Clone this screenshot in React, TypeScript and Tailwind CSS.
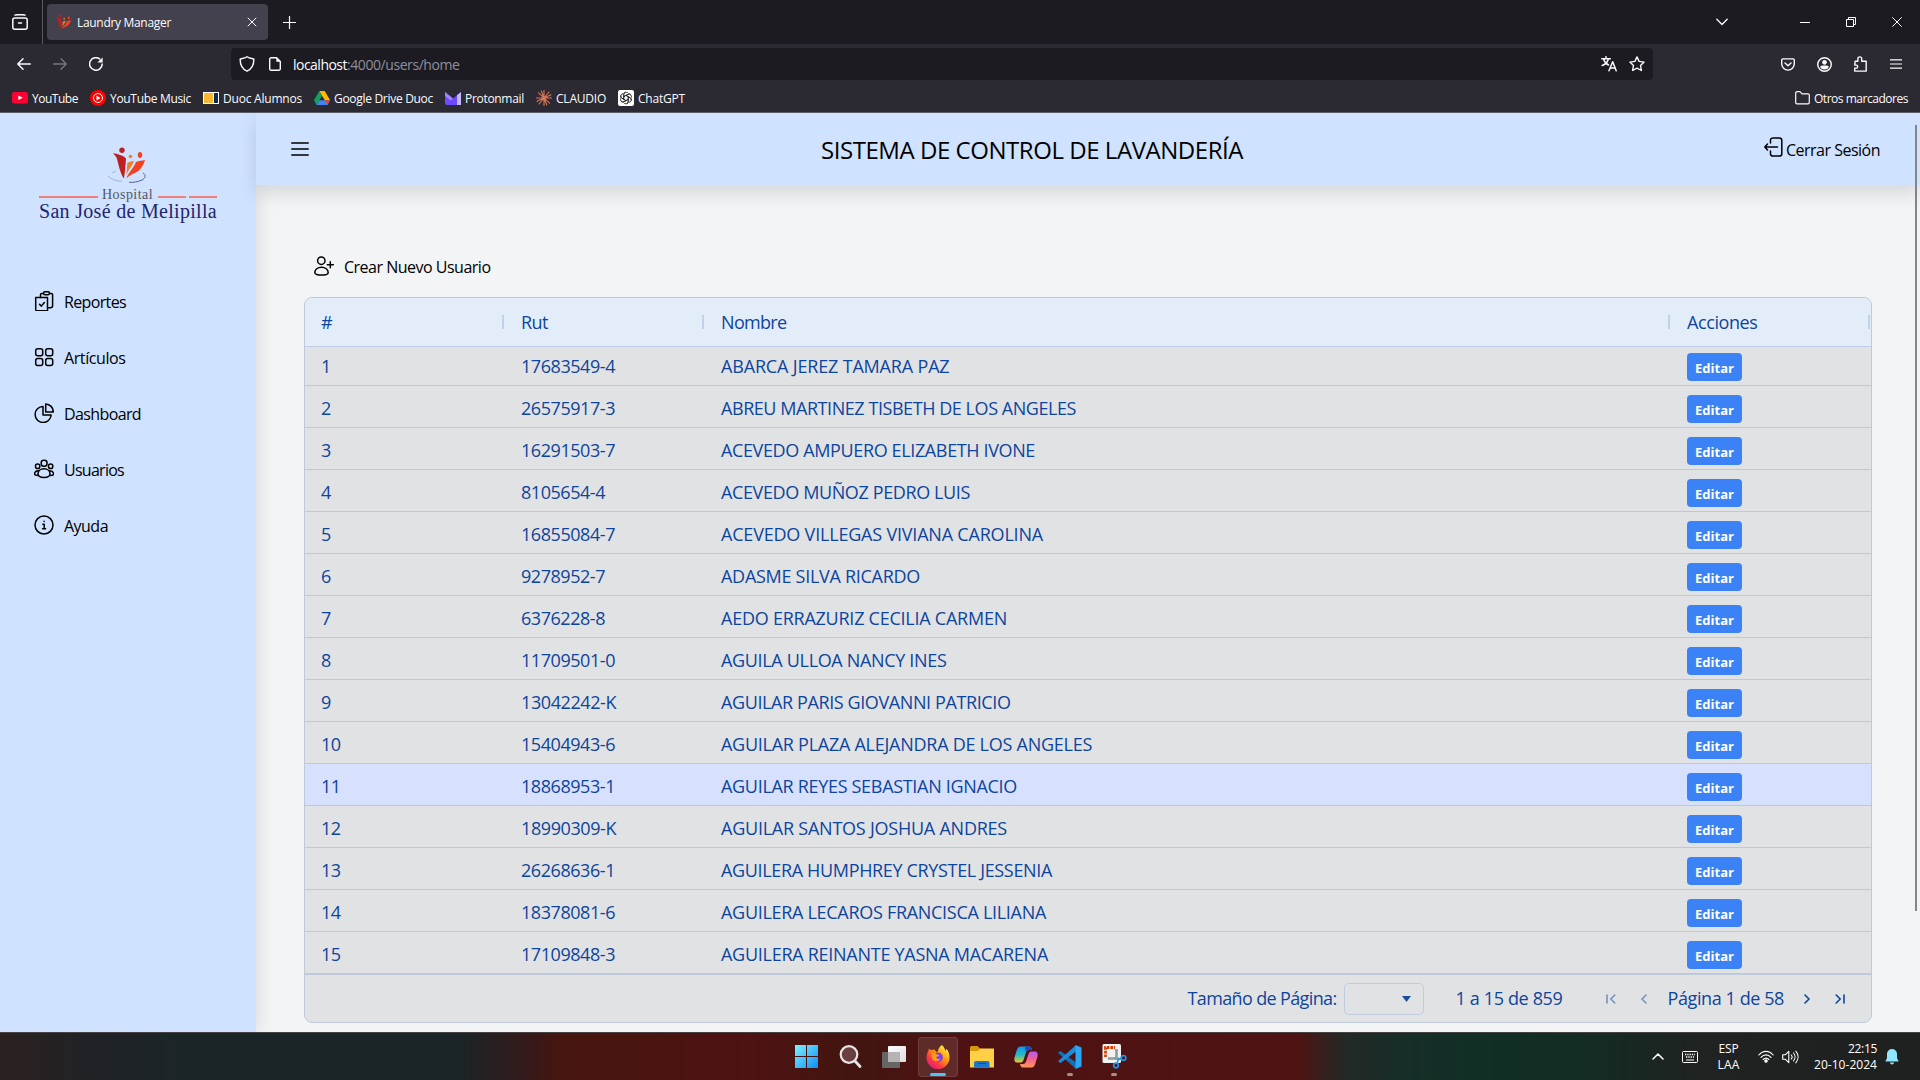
import { useLayoutEffect, useRef, type ReactNode } from 'react';

/** Inline text whose tracking is tuned so the line takes the given width. */
function Fit({ w, children, className = '' }: { w: number; children: string; className?: string }) {
  const ref = useRef<HTMLSpanElement>(null);
  useLayoutEffect(() => {
    const el = ref.current;
    if (!el) return;
    el.style.letterSpacing = '0px';
    const natural = el.getBoundingClientRect().width;
    el.style.letterSpacing = `${(w - natural) / children.length}px`;
  }, [w, children]);
  return (
    <span ref={ref} className={`inline-block whitespace-pre ${className}`}>
      {children}
    </span>
  );
}

const users: [string, number, string, number][] = [
  ['17683549-4', 94, 'ABARCA JEREZ TAMARA PAZ', 228.5],
  ['26575917-3', 94, 'ABREU MARTINEZ TISBETH DE LOS ANGELES', 355],
  ['16291503-7', 94, 'ACEVEDO AMPUERO ELIZABETH IVONE', 314],
  ['8105654-4', 84, 'ACEVEDO MUÑOZ PEDRO LUIS', 249],
  ['16855084-7', 94, 'ACEVEDO VILLEGAS VIVIANA CAROLINA', 322],
  ['9278952-7', 84, 'ADASME SILVA RICARDO', 199],
  ['6376228-8', 84, 'AEDO ERRAZURIZ CECILIA CARMEN', 286],
  ['11709501-0', 94, 'AGUILA ULLOA NANCY INES', 225.5],
  ['13042242-K', 95, 'AGUILAR PARIS GIOVANNI PATRICIO', 289.5],
  ['15404943-6', 94, 'AGUILAR PLAZA ALEJANDRA DE LOS ANGELES', 371],
  ['18868953-1', 94, 'AGUILAR REYES SEBASTIAN IGNACIO', 296],
  ['18990309-K', 95, 'AGUILAR SANTOS JOSHUA ANDRES', 286],
  ['26268636-1', 94, 'AGUILERA HUMPHREY CRYSTEL JESSENIA', 331],
  ['18378081-6', 94, 'AGUILERA LECAROS FRANCISCA LILIANA', 325],
  ['17109848-3', 94, 'AGUILERA REINANTE YASNA MACARENA', 327],
];

function Figures() {
  return (
    <>
      <circle cx="14" cy="3.200" r="2.700" fill="#b8232a" />
      <circle cx="22.500" cy="9.500" r="1.800" fill="#ee7f2b" />
      <ellipse cx="32" cy="8" rx="2.200" ry="2.900" fill="#f2421f" />
      <path d="M5 6c4 1.200 10 2 13 5.500C17.500 18 17 25 16 31.500 12 27 10.500 16 8.500 10.500Z" fill="#be2022" />
      <path d="M19.300 16c2.200-1.200 4.500-1.800 6.700-2-1.500 5-6 8.500-7.600 14.500Z" fill="#ee7f2b" />
      <path d="M28 15c3-1.500 6-1.200 9-2-1 3.500-3 7.500-6 10.500-4 3-8.500 3.500-12.500 8 1.500-6 7.500-10.500 9.500-16.500Z" fill="#f2421f" />
    </>
  );
}

const S = { fill: 'none', stroke: 'currentColor', strokeLinecap: 'round', strokeLinejoin: 'round' } as const;

function Ico({ children, className = 'size-4', vb = '0 0 16 16', sw = 1.3 }: { children: ReactNode; className?: string; vb?: string; sw?: number }) {
  return (
    <svg viewBox={vb} className={`shrink-0 ${className}`} {...S} strokeWidth={sw}>
      {children}
    </svg>
  );
}

function Bookmark({ icon, label, w, ml = '' }: { icon: ReactNode; label: string; w: number; ml?: string }) {
  return (
    <div className={`flex items-center gap-1 ${ml}`}>
      {icon}
      <Fit w={w} className="pt-[2px]">{label}</Fit>
    </div>
  );
}

function BrowserChrome() {
  return (
    <div className="flex h-[113px] flex-col bg-[#2b2a33] text-[12px] text-[#fbfbfe]">
      <div className="flex h-11 items-center bg-[#1c1b22]">
        <div className="flex h-11 w-[43px] items-center border-r border-[#5b5a62] pl-3">
          <Ico className="size-4" sw={1.5}>
            <path d="M3 1.200C4 .7 5 .7 6 .7h4c1 0 2 0 3 .5" />
            <rect x=".8" y="3.900" width="14.400" height="11.300" rx="2" />
            <path d="M6.500 9h3" />
          </Ico>
        </div>
        <div className="ml-1 flex h-9 w-[221px] items-center rounded-[4px] bg-[#42414d] pl-2">
          <svg viewBox="3 0 36 33" className="h-4 w-[17px]"><Figures /></svg>
          <Fit w={94} className="ml-[5px] pt-[2px]">Laundry Manager</Fit>
          <Ico className="ml-auto mr-[11px] size-[10px]" vb="0 0 10 10" sw={1}>
            <path d="m1 1 8 8M9 1 1 9" />
          </Ico>
        </div>
        <Ico className="ml-[15px] size-[13px]" vb="0 0 13 13" sw={1.2}>
          <path d="M6.500.5v12M.5 6.500h12" />
        </Ico>
        <div className="ml-auto flex items-center">
          <Ico className="mr-[72px] size-3" vb="0 0 12 12" sw={1.3}>
            <path d="m.8 3.300 5.200 5.200 5.200-5.200" />
          </Ico>
          <div className="mr-9 h-px w-[10px] bg-white" />
          <svg viewBox="0 0 10 10" className="mr-9 size-[10px]" fill="none" stroke="#fff">
            <path d="M.5 2.500h7v7h-7zM2.500 2.500v-2h7v7h-2" />
          </svg>
          <svg viewBox="0 0 10 10" className="mr-[18px] size-[10px]" fill="none" stroke="#fff">
            <path d="m.3.3 9.400 9.400M9.700.3.300 9.700" />
          </svg>
        </div>
      </div>
      <div className="flex h-10 items-center">
        <Ico className="ml-[17px] size-[14px]" vb="0 0 14 14" sw={1.5}>
          <path d="M13.300 7H.8M6 1.800.8 7 6 12.200" />
        </Ico>
        <Ico className="ml-[22px] size-[14px] text-[#77767e]" vb="0 0 14 14" sw={1.4}>
          <path d="M.7 7h12.500M8 1.800 13.200 7 8 12.200" />
        </Ico>
        <Ico className="ml-[22px] size-[14px]" vb="0 0 14 14" sw={1.500}>
          <path d="M13.200 7A6.300 6.300 0 1 1 10.800 2" />
          <path d="M13.600.4v5.200H8.400Z" fill="currentColor" stroke="none" />
        </Ico>
        <div className="ml-[128px] flex h-8 w-[1422px] items-center rounded-[4px] bg-[#1c1b22] pl-2">
          <Ico className="size-4" sw={1.400}>
            <path d="M8 .8C6 2.200 3.500 2.500 1.200 3 1 8.500 3 13 8 15.200 13 13 15 8.500 14.800 3 12.500 2.500 10 2.200 8 .8Z" />
          </Ico>
          <Ico className="ml-[14px] h-[14px] w-3" vb="0 0 12 14" sw={1.400}>
            <path d="M2.500.7h5l3.800 3.800v7.300a1.500 1.500 0 0 1-1.500 1.500H2.200A1.500 1.500 0 0 1 .7 11.800V2.200A1.500 1.500 0 0 1 2.200.7Z" />
            <path d="M7.300 0v4.700H12Z" fill="currentColor" stroke="none" />
          </Ico>
          <div className="ml-3 flex pt-px text-[14px]">
            <Fit w={54}>localhost</Fit>
            <Fit w={112.5} className="text-[#8f8f9d]">:4000/users/home</Fit>
          </div>
          <div className="ml-auto mr-2 flex items-center gap-3">
            <Ico className="size-4" sw={1.500}>
              <path d="M.8 2.700h8.500M5 .7v2M7.500 2.700C6.500 6 4 8.500 1.200 9.500M2.500 2.900C3.500 6 5.500 8 7.500 9M8 14.800l3.700-9 3.500 9M9.300 12h4.700" />
            </Ico>
            <Ico className="size-4" sw={1.400}>
              <path d="m8 .9 2.100 4.500 5 .7-3.600 3.400.9 5L8 12.100l-4.400 2.400.9-5L.9 6.100l5-.7Z" />
            </Ico>
          </div>
        </div>
        <div className="ml-auto mr-[18px] flex items-center">
          <Ico className="h-[13px] w-[14px]" vb="0 0 14 13" sw={1.400}>
            <path d="M2 .9h10a1.300 1.300 0 0 1 1.300 1.300v3.600a6.300 6.300 0 0 1-12.600 0V2.200A1.300 1.300 0 0 1 2 .9ZM4 5l3 2.800L10 5" />
          </Ico>
          <Ico className="ml-[22px] size-[15px]" sw={1.500}>
            <circle cx="8" cy="8" r="7.200" />
            <circle cx="8" cy="5.700" r="2.500" fill="currentColor" stroke="none" />
            <path d="M3.500 10.300c0-1.500 9-1.500 9 0 0 1.500-2 3-4.500 3s-4.500-1.500-4.500-3Z" fill="currentColor" stroke="none" />
          </Ico>
          <Ico className="ml-[20px] mr-px size-4" sw={1.400}>
            <path d="M3.200 5.200h2.700V2.800a1.900 1.900 0 0 1 3.800 0v2.400h4.500v9.900H2.700v-3h1.500a1.500 1.500 0 0 0 0-3H2.700Z" />
          </Ico>
          <Ico className="ml-[21px] h-[10px] w-3" vb="0 0 12 10" sw={1.200}>
            <path d="M0 .8h12M0 5h12M0 9.200h12" />
          </Ico>
        </div>
      </div>
      <div className="flex h-[29px] items-center border-b border-[#5b5b66] pl-3">
        <Bookmark label="YouTube" w={46} icon={
          <svg viewBox="0 0 16 12" className="h-3 w-4"><rect width="16" height="11.500" rx="2.500" fill="#ff0033" /><path d="m6.300 3.500 4.500 2.300-4.500 2.300Z" fill="#fff" /></svg>
        } />
        <Bookmark ml="ml-3" label="YouTube Music" w={81} icon={
          <svg viewBox="0 0 16 16" className="size-4"><circle cx="8" cy="8" r="8" fill="#f00" /><circle cx="8" cy="8" r="4.500" fill="none" stroke="#fff" strokeWidth="1" /><path d="m6.500 5.500 4 2.500-4 2.500Z" fill="#fff" /></svg>
        } />
        <Bookmark ml="ml-3" label="Duoc Alumnos" w={79} icon={
          <svg viewBox="0 0 16 12" className="h-3 w-4"><path d="M0 0h16v12H0z" fill="#fff" /><path d="M1 1h9v10H1z" fill="#fdb62f" /><path d="M11 1h4v10h-4z" fill="#0a2c57" /></svg>
        } />
        <Bookmark ml="ml-3" label="Google Drive Duoc" w={99} icon={
          <svg viewBox="0 0 16 14" className="h-[14px] w-4"><path d="M5.300 0h5.400L16 9h-5.300L8 4.700Z" fill="#ffba00" /><path d="M5.300 0 0 9.300 2.600 14 8 4.700Z" fill="#12a05c" /><path d="M5.300 9.300H16L13.400 14H2.600Z" fill="#4285f4" /><path d="M10.700 9.300H16L13.400 14Z" fill="#ea4335" /></svg>
        } />
        <Bookmark ml="ml-3" label="Protonmail" w={59} icon={
          <svg viewBox="0 0 16 13" className="h-[13px] w-4"><path d="M0 0 8 6.500 16 0v13H2a2 2 0 0 1-2-2Z" fill="#6d4aff" /><path d="M12 3.200 16 0v13h-4Z" fill="#c5b7ff" /><path d="m0 0 8 6.500-2.500 2L0 4Z" fill="#9d86ff" /></svg>
        } />
        <Bookmark ml="ml-3" label="CLAUDIO" w={50} icon={
          <svg viewBox="-8 -8 16 16" className="size-4" stroke="#d97757" strokeWidth="1.100" strokeLinecap="round"><path d="M0-7.500v15M-7.500 0h15M-5.500-5.200l11 10.400M5-6-5 6M-2.700-7 2.700 7M-7 3.300l14-6.600" /></svg>
        } />
        <Bookmark ml="ml-3" label="ChatGPT" w={47} icon={
          <svg viewBox="-8 -8 16 16" className="size-4"><rect x="-8" y="-8" width="16" height="16" rx="2" fill="#fff" />
            <g fill="none" stroke="#222" strokeWidth=".8">{[0, 60, 120, 180, 240, 300].map((a) => <path key={a} transform={`rotate(${a})`} d="M-2.200 1.300v-4.600a2.500 2.500 0 0 1 4.600-1.300M-2.200-1.500 2-3.800a2.400 2.400 0 0 1 3 .5" />)}</g></svg>
        } />
        <div className="ml-auto mr-[12px] flex items-center gap-1">
          <Ico className="h-[14px] w-[15px]" vb="0 0 15 14" sw={1.200}>
            <path d="M.7 2a1.300 1.300 0 0 1 1.300-1.300h3l2 2.100h6a1.300 1.300 0 0 1 1.300 1.300v7.500a1.300 1.300 0 0 1-1.300 1.300H2A1.300 1.300 0 0 1 .7 11.600Z" />
          </Ico>
          <Fit w={94} className="pt-[2px]">Otros marcadores</Fit>
        </div>
      </div>
    </div>
  );
}

const menu: { label: string; w: number; icon: ReactNode }[] = [
  { label: 'Reportes', w: 62, icon: <><path d="M1.800 6.500h11.700v13.300H3A1.300 1.300 0 0 1 1.700 18.500V6.500Z" /><path d="m5.500 13.300 1.900 1.800 3-3.500M6.500 6.500V3.700c0-.8.500-1.200 1.200-1.200h1.800M15.500 2.500h1.800c.8 0 1.300.5 1.300 1.300v10.800c0 1.500-.8 2.200-2 2.200h-3M9.500 2.300c0-1 .7-1.600 1.600-1.600h2.800c1 0 1.600.6 1.600 1.600s-.6 1.500-1.600 1.500h-2.800c-.9 0-1.600-.5-1.600-1.500Z" /></> },
  { label: 'Artículos', w: 61.500, icon: <><rect x="1.700" y="1.700" width="7" height="7" rx="2" /><rect x="11.700" y="1.700" width="7" height="7" rx="2" /><rect x="1.700" y="11.500" width="7" height="7" rx="2" /><rect x="11.700" y="11.500" width="7" height="7" rx="2" /></> },
  { label: 'Dashboard', w: 77, icon: <><path d="M9 3.500a8 8 0 1 0 8.100 8.600H9Z" /><path d="M11.700.9a8 8 0 0 1 7.600 8h-7.600Z" /></> },
  { label: 'Usuarios', w: 60, icon: <><rect x="7.200" y="1.200" width="5.800" height="6" rx="2.500" /><rect x="1.500" y="5" width="4.300" height="4.500" rx="2.100" /><rect x="14.500" y="5" width="4.300" height="4.500" rx="2.100" /><path d="M10 9.800c3.500 0 6 2.200 6 5s-2.500 3.700-6 3.700-6-.9-6-3.700 2.500-5 6-5ZM4.500 11.800c-2.600.2-3.900 2-3.900 3.300 0 1 1.200 1.500 3.400 1.500M15.700 11.800c2.600.2 3.900 2 3.900 3.300 0 1-1.200 1.500-3.400 1.500" /></> },
  { label: 'Ayuda', w: 44, icon: <><circle cx="10" cy="10" r="9" /><path d="M8.800 9.200h1.400v4.500M8.600 13.800h3M10.100 6.300v.2" /></> },
];

function Sidebar() {
  return (
    <aside className="relative z-0 flex w-64 shrink-0 flex-col bg-[#cfe2ff] shadow-[4px_0_16px_rgba(0,0,0,0.09)]">
      <div className="mx-auto mt-[34px] flex h-20 w-[178px] flex-col items-center">
        <svg viewBox="0 0 44 38" className="h-[38px] w-11 shrink-0">
          <path d="M37 26c3 1.500 3 5-1 7s-9 2.500-13 2.300" fill="none" stroke="#5c5f9e" strokeWidth="1" />
          <path d="M2 29c3 3.500 8 5 14 5.300M6 26l4-2" fill="none" stroke="#a9b3d8" strokeWidth="1" />
          <g transform="translate(2 0)">
            <Figures />
          </g>
        </svg>
        <div className="mt-px flex h-[17px] w-full items-center font-['Liberation_Serif',serif] text-[14px] leading-[17px] text-[#55565e]">
          <div className="mt-[5px] h-[2px] w-[59px] bg-[#ee8079]" />
          <Fit w={51} className="ml-1">Hospital</Fit>
          <div className="ml-[5px] mt-[5px] h-[2px] w-7 bg-[#ee8079]" />
          <div className="ml-[3px] mt-[5px] h-[2px] w-7 bg-[#ee8079]" />
        </div>
        <Fit w={178} className="-mt-[2px] font-['Liberation_Serif',serif] text-[20px] leading-[20px] text-[#23246f]">San José de Melipilla</Fit>
      </div>
      <nav className="mt-[46px] flex flex-col">
        {menu.map((m) => (
          <a key={m.label} className="flex h-14 items-center pl-[34px] text-[16px] text-black">
            <Ico className="size-5" vb="0 0 20 20" sw={1.500}>{m.icon}</Ico>
            <Fit w={m.w} className="ml-[10px] pt-px">{m.label}</Fit>
          </a>
        ))}
      </nav>
    </aside>
  );
}

const grid = 'grid grid-cols-[200px_200px_966px_1fr]';

function HeaderCell({ w, children }: { w: number; children: string }) {
  return (
    <div className="flex items-center justify-between pl-4 pr-px">
      <Fit w={w}>{children}</Fit>
      <div className="h-[14px] w-[2px] bg-[#c2d1ea]" />
    </div>
  );
}

function UsersTable() {
  return (
    <div className="flex h-[726px] w-[1568px] flex-col overflow-hidden rounded-[8px] border border-[#c0c9d9] bg-[#e1e2e4] text-[18px] text-[#0d459c]">
      <div className={`${grid} h-[49px] shrink-0 border-b border-[#c0cfe9] bg-[#e3edfa]`}>
        <HeaderCell w={10}>#</HeaderCell>
        <HeaderCell w={27}>Rut</HeaderCell>
        <HeaderCell w={65.5}>Nombre</HeaderCell>
        <HeaderCell w={70.5}>Acciones</HeaderCell>
      </div>
      <div className="-mt-[3px] flex flex-col">
        {users.map(([rut, rw, name, nw], i) => (
          <div
            key={rut}
            className={`${grid} h-[42px] border-b border-[#bfc8db] ${i === 0 ? '[clip-path:inset(3px_0_0_0)]' : ''} ${i === 10 ? 'bg-[#d7e0fd]' : ''}`}
          >
            <div className="flex items-center pl-4 pt-[3px]"><Fit w={i < 9 ? 10 : 19.500}>{String(i + 1)}</Fit></div>
            <div className="flex items-center pl-4 pt-[3px]"><Fit w={rw}>{rut}</Fit></div>
            <div className="flex items-center pl-4 pt-[3px]"><Fit w={nw}>{name}</Fit></div>
            <div className="pl-4 pt-[9px]">
              <button className="flex h-7 w-[55px] items-center justify-center rounded-[4px] bg-[#3b82f6] pt-[3px] text-[13px] font-bold text-white">
                <Fit w={39}>Editar</Fit>
              </button>
            </div>
          </div>
        ))}
      </div>
      <div className="flex flex-1 items-center justify-end border-t border-[#bfcbdc] pr-[26px]">
        <Fit w={149}>Tamaño de Página:</Fit>
        <div className="ml-[7px] flex h-8 w-20 items-center justify-end rounded-[5px] border border-[#c0cbe0] pr-3">
          <svg viewBox="0 0 9 6" className="h-[6px] w-[9px]" fill="#1f4f9f"><path d="M0 0h9L4.500 6Z" /></svg>
        </div>
        <Fit w={107} className="ml-[32px]">1 a 15 de 859</Fit>
        <Ico className="ml-[43px] size-[10px] opacity-50" vb="0 0 10 10" sw={1.600}><path d="M1 1v8M8.800 1 4.800 5l4 4" /></Ico>
        <Ico className="ml-[23px] size-[10px] opacity-50" vb="0 0 10 10" sw={1.600}><path d="M7 1 3 5l4 4" /></Ico>
        <Fit w={116.500} className="ml-[19px]">Página 1 de 58</Fit>
        <Ico className="ml-[18px] size-[10px]" vb="0 0 10 10" sw={1.600}><path d="m3 1 4 4-4 4" /></Ico>
        <Ico className="ml-[23px] size-[10px]" vb="0 0 10 10" sw={1.600}><path d="m1.200 1 4 4-4 4M9 1v8" /></Ico>
      </div>
    </div>
  );
}

function AppPage() {
  return (
    <div className="flex h-[919px] overflow-hidden bg-[#f3f4f6]">
      <Sidebar />
      <div className="relative flex min-w-0 flex-1 flex-col">
        <header className="flex h-[72px] shrink-0 items-center bg-[#cfe2ff] pl-[35px] pr-[40px] text-black shadow-[0_8px_18px_rgba(0,0,0,0.12)]">
          <Ico className="h-[14px] w-[18px]" vb="0 0 18 14" sw={1.700}><path d="M.8 1h16.400M.8 7h16.400M.8 13h16.400" /></Ico>
          <Fit w={422} className="ml-[512px] pt-[2px] text-[24px]">SISTEMA DE CONTROL DE LAVANDERÍA</Fit>
          <div className="ml-auto flex items-center text-[16px]">
            <Ico className="-mt-1 h-5 w-[19px]" vb="0 0 19 20" sw={1.500}>
              <path d="M6.500 6V3.300C6.500 1.800 7.500.9 9 .9h6.300c1.500 0 2.500.9 2.500 2.400v13.400c0 1.500-1 2.400-2.500 2.400H9c-1.500 0-2.500-.9-2.500-2.400V14M13.500 10H1.200M3.500 7 .8 10l2.700 3" />
            </Ico>
            <Fit w={94} className="ml-[3px] pt-[2px]">Cerrar Sesión</Fit>
          </div>
        </header>
        <main className="flex flex-col pl-12">
          <div className="ml-[10px] mt-[66px] flex h-[30px] items-center text-[16px] text-black">
            <Ico className="-mt-px size-5" vb="0 0 20 20" sw={1.500}>
              <circle cx="7.300" cy="4.700" r="3.700" /><path d="M7.500 11.200c4 0 6.700 2.500 6.700 5.200 0 1.800-2.700 2.700-6.700 2.700S.8 18.200.8 16.400c0-2.700 2.700-5.200 6.700-5.200ZM16.300 5.700v6M13.300 8.700h6" />
            </Ico>
            <Fit w={146.500} className="ml-[10px] pt-px">Crear Nuevo Usuario</Fit>
          </div>
          <div className="mt-4">
            <UsersTable />
          </div>
        </main>
        <div className="absolute right-[3px] top-3 h-[786px] w-[2px] bg-[#848587]" />
      </div>
    </div>
  );
}

function Task({ children, active, running }: { children: ReactNode; active?: boolean; running?: boolean }) {
  return (
    <div className={`relative flex h-10 w-10 items-center justify-center rounded-[4px] ${active ? 'border border-white/10 bg-white/10' : ''}`}>
      {children}
      {active && <div className="absolute bottom-0 left-[11px] h-[3px] w-4 rounded-full bg-[#4cc2ff]" />}
      {running && <div className="absolute bottom-px left-[17px] h-[3px] w-[6px] rounded-full bg-[#a58f90]" />}
    </div>
  );
}

function Taskbar() {
  return (
    <div className="flex h-12 items-center border-t border-[#474345] bg-[linear-gradient(to_right,#2b2020_0px,#202226_90px,#1b2527_180px,#1b2426_460px,#341a1b_525px,#46150f_560px,#4d1212_750px,#421511_860px,#4f1212_960px,#4f1313_1300px,#3a1d1b_1318px,#232926_1345px,#172d28_1400px,#112f25_1480px,#132b22_1590px,#1f2322_1690px,#1f2020_1920px)] text-[12px] text-white">
      <div className="ml-[786px] flex gap-1">
        <Task>
          <svg viewBox="0 0 23 23" className="size-[23px]"><defs><linearGradient id="win" x2="1" y2="1"><stop stopColor="#7df1ff" /><stop offset="1" stopColor="#0d8ff5" /></linearGradient></defs><path d="M0 0h11v11H0zM12 0h11v11H12zM0 12h11v11H0zM12 12h11v11H12z" fill="url(#win)" /></svg>
        </Task>
        <Task>
          <svg viewBox="0 0 23 23" className="size-[23px]" fill="none" stroke="#e9e4e4"><circle cx="10" cy="9.500" r="8.300" fill="#6b3f3f" strokeWidth="2.200" /><path d="m16 16 5 5.500" strokeWidth="2.800" strokeLinecap="round" /></svg>
        </Task>
        <Task>
          <svg viewBox="0 0 24 22" className="h-[22px] w-6"><defs><linearGradient id="tv" x2="1" y2="1"><stop stopColor="#fff" /><stop offset="1" stopColor="#ddd" /></linearGradient></defs><rect y="6" width="18" height="16" rx="1" fill="#666" /><rect x="6" width="18" height="16" rx="1" fill="url(#tv)" /><path d="M6 6h12v10H6z" fill="#b5b3b3" /></svg>
        </Task>
        <Task active>
          <svg viewBox="0 0 24 24" className="size-6"><defs><linearGradient id="ff" x1="1" y1="0" x2=".2" y2="1"><stop offset=".1" stopColor="#fff44f" /><stop offset=".45" stopColor="#ff980e" /><stop offset=".75" stopColor="#ff3647" /><stop offset="1" stopColor="#e31587" /></linearGradient></defs>
            <path d="M16 0c2 2 3 4 3.200 5.500.9-.3 1.300-1 1.300-1.800C22.500 6 23.500 9 23.500 12.500A11.500 11.500 0 0 1 .5 12.500C.5 10 1.300 7.500 2.500 6L2.800 3.500l2 1.500 3.500-.5 2 2.500 1.500-.5C12 4 13.500 1.500 16 0Z" fill="url(#ff)" />
            <circle cx="12.200" cy="12.200" r="4.600" fill="#7a3df0" /><path d="M5.500 8.500c2-.8 4-.5 5 .8l3 .7c-1 1.800-2.500 1.200-3.500 2.500.8 1.500 3 2 4.500.8 0 3-6.500 4.500-8.500.5Z" fill="#ff9a1c" /></svg>
        </Task>
        <Task>
          <svg viewBox="0 0 24 22" className="h-[22px] w-6"><path d="M0 1.500A1.500 1.500 0 0 1 1.500 0h6l2.500 2.500V7H0Z" fill="#d89a0b" /><path d="M0 5h8l2-2.500h14V21.500H0Z" fill="#ffcf45" /><path d="M4 21.500V17a2 2 0 0 1 2-2h11.500a2 2 0 0 1 2 2v4.500Z" fill="#1a77c9" /><path d="M8 17.500h8" stroke="#0c4f94" /></svg>
        </Task>
        <Task>
          <svg viewBox="0 0 24 22" className="h-[22px] w-6"><defs><linearGradient id="c1" y2="1" x2="0"><stop stopColor="#1596f0" /><stop offset=".5" stopColor="#23b9c9" /><stop offset="1" stopColor="#e8c928" /></linearGradient><linearGradient id="c2" y2="1" x2="0"><stop stopColor="#b45cf2" /><stop offset=".5" stopColor="#f4608f" /><stop offset="1" stopColor="#ff9b52" /></linearGradient></defs>
            <path d="M6.500.5H15c2 0 2.500 1.500 3 3.500h-3c-2 0-2.700 1.500-3.500 4L9.500 14c-.8 2-1.500 2.500-4 2.500H3C.5 16.500 0 14 .5 11.500l2.500-8C3.800 1.500 5 .5 6.500.5Z" fill="url(#c1)" />
            <path d="M15 .5c2 0 2.500 1.500 3 3.500h-5l-1.500 2L11 .5Z" fill="#174ec7" />
            <path d="M17.500 21.500H9c-2 0-2.500-1.500-3-3.500h3c2 0 2.700-1.500 3.500-4l2-6c.8-2 1.500-2.500 4-2.500H21c2.500 0 3 2.500 2.500 5l-2.500 8c-.8 2-2 3-3.500 3Z" fill="url(#c2)" /></svg>
        </Task>
        <Task running>
          <svg viewBox="0 0 24 24" className="size-6"><path d="M0 7.800 2.500 6 18 17.500V24Z" fill="#0e73bb" /><path d="M0 16.200 2.500 18 18 6.500V0Z" fill="#1e8ad6" /><path d="m17.500 0 6 2.500v19l-6 2.500Z" fill="#2aa6f2" /></svg>
        </Task>
        <Task running>
          <svg viewBox="0 0 25 25" className="size-[25px]"><rect x=".5" width="18.500" height="19" rx="1.500" fill="#f2f2f2" /><path d="M3.500 13V3.500H13" fill="none" stroke="#d83b01" strokeWidth="2.800" strokeDasharray="2.600 1" /><path d="M14.500 5v11M6 14.500h9" fill="none" stroke="#8f9aa3" strokeWidth="2.600" /><path d="m12 14 8 1" stroke="#8f9aa3" strokeWidth="2" /><circle cx="21.500" cy="14" r="2.300" fill="none" stroke="#1a93e6" strokeWidth="1.700" /><circle cx="14" cy="21.500" r="2.300" fill="none" stroke="#1a93e6" strokeWidth="1.700" /><path d="m15 19.500 1.500-4.500h3" fill="none" stroke="#1a93e6" strokeWidth="1.500" /></svg>
        </Task>
      </div>
      <div className="ml-auto flex items-center">
        <Ico className="h-[7px] w-3" vb="0 0 12 7" sw={1.500}><path d="m1 6 5-5 5 5" /></Ico>
        <svg viewBox="0 0 16 12" className="ml-[18px] h-3 w-4" fill="none" stroke="#fff"><rect x=".5" y=".5" width="15" height="11" rx="1" /><path d="M3 3.500h10M4 6h8" strokeDasharray="1.300 1" strokeWidth="1.300" /><path d="M4 9h8" /></svg>
        <div className="ml-[19px] flex w-[23px] flex-col items-center leading-4">
          <Fit w={20}>ESP</Fit>
          <Fit w={22}>LAA</Fit>
        </div>
        <Ico className="ml-[18px] h-[13px] w-4" vb="0 0 16 13" sw={1.100}><path d="M.8 5C5 .2 11 .2 15.200 5M3 7.300c3-3.300 7-3.300 10 0M5.200 9.500c1.700-1.800 3.900-1.800 5.600 0" /><circle cx="8" cy="11" r="1.200" fill="currentColor" /></Ico>
        <Ico className="ml-2 h-[14px] w-[17px]" vb="0 0 17 14" sw={1.100}><path d="M.7 4.800h2.500L6.800 1.300v11.400L3.200 9.200H.7ZM9.300 5c1 1.200 1 2.800 0 4M11.500 3c2 2.300 2 5.700 0 8M13.800 1.200c3 3.500 3 8.100 0 11.600" /></Ico>
        <div className="ml-[14px] flex w-[64px] flex-col items-end leading-4">
          <Fit w={29}>22:15</Fit>
          <Fit w={63}>20-10-2024</Fit>
        </div>
        <svg viewBox="0 0 14 16" className="ml-2 mr-[21px] h-4 w-[14px]" fill="#8fe6ff"><path d="M7 0a5 5 0 0 1 5 5v4l1.700 3.500H.3L2 9V5a5 5 0 0 1 5-5ZM5 13.500h4a2 2 0 0 1-4 0Z" /></svg>
      </div>
    </div>
  );
}

export default function App() {
  return (
    <div className="h-[1080px] w-[1920px] overflow-hidden font-['Open_Sans','Noto_Sans',sans-serif]">
      <BrowserChrome />
      <AppPage />
      <Taskbar />
    </div>
  );
}
